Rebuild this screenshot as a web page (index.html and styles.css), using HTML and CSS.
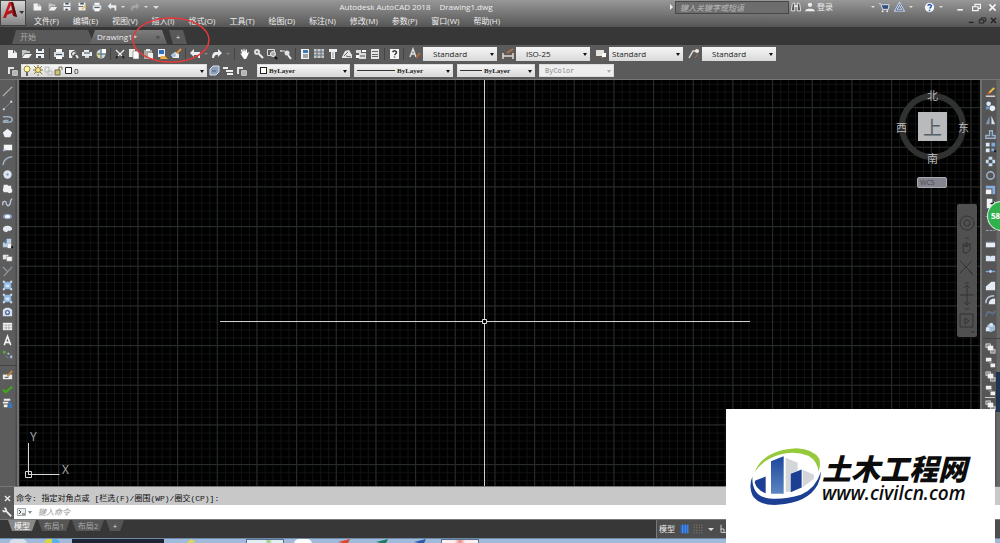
FILE: index.html
```html
<!DOCTYPE html>
<html lang="zh-CN">
<head>
<meta charset="utf-8">
<title>Autodesk AutoCAD 2018 Drawing1.dwg</title>
<link rel="stylesheet" href="styles.css">
</head>
<body>
<svg class="sprite" aria-hidden="true">
  <defs>
    <linearGradient id="blueFade" x1="0" y1="0" x2="0" y2="1"><stop offset="0" stop-color="#1d459b"/><stop offset="1" stop-color="#5b86c2"/></linearGradient>
    <linearGradient id="redFade" x1="0" y1="0" x2="1" y2="1"><stop offset="0" stop-color="#e02222"/><stop offset="1" stop-color="#8e0d12"/></linearGradient>
  </defs>
  <symbol id="new" viewBox="0 0 14 14"><path fill="#f2f2f2" d="M3 3h5v3h4v5H3z"/><path fill="#cfcfcf" d="M9 3l3 3H9z"/></symbol>
  <symbol id="open" viewBox="0 0 14 14"><path fill="#bfc4c4" d="M3 3h4l1 1h3v2H6l-3 4z"/><path fill="#f0f0f0" d="M6 7h7l-3 4H3z"/></symbol>
  <symbol id="save" viewBox="0 0 14 14"><path fill="#eef1f3" d="M3 2h8v9H3z"/><path fill="#45505a" d="M5 2h4v2H5zM3 6h8v1H3zM5 9h3v2H5z"/></symbol>
  <symbol id="saveas" viewBox="0 0 14 14"><path fill="#eef1f3" d="M3 2h8v9H3z"/><path fill="#45505a" d="M5 2h4v2H5zM3 6h5v1H3z"/><path stroke="#f0c060" stroke-width="2" d="M7 10l4-5"/></symbol>
  <symbol id="print" viewBox="0 0 14 14"><path fill="#f4f4f4" d="M4 2h6v3H4z"/><path fill="#d5dce2" d="M2 5h10v5H2z"/><path fill="#4a4f54" d="M4 7h6v1H4z"/><path fill="#fff" d="M4 9h6v3H4z"/></symbol>
  <symbol id="preview" viewBox="0 0 14 14"><path fill="#eee" d="M3 3h5l3 3-3 1-2 4H3z"/><circle cx="8" cy="7" r="2.500" fill="none" stroke="#444"/><path stroke="#eee" stroke-width="2" d="M10 8l2 3"/></symbol>
  <symbol id="plot" viewBox="0 0 14 14"><path fill="#e6edf2" d="M4 3h5v2h3v4H2V5h2z"/><path stroke="#444" d="M4 6h6"/><path fill="#cfdae2" d="M5 9h4v2H5z"/></symbol>
  <symbol id="globe" viewBox="0 0 14 14"><circle cx="7" cy="7" r="4.500" fill="#c9d9e9"/><path fill="#eed768" d="M3 5l3 1 1 5-3-1z"/><path fill="#fff" d="M8 2h4v4H8z"/><path stroke="#4d6580" d="M7 3v8M3 7h8"/></symbol>
  <symbol id="cut" viewBox="0 0 14 14"><path fill="none" stroke="#ededed" stroke-width="1.300" d="M3 3l7 7M11 3l-7 7"/><path stroke="#222" stroke-width="2" d="M3 11l2-2M9 9l2 2"/></symbol>
  <symbol id="copy" viewBox="0 0 14 14"><path fill="#e9eeea" d="M2 2h6v8H2z"/><path fill="#fff" stroke="#777" stroke-width=".6" d="M6 4h4l2 2v6H6z"/></symbol>
  <symbol id="paste" viewBox="0 0 14 14"><path fill="#aaa79e" d="M3 3h8v9H3z"/><path fill="#eee" d="M5 2h4v2H5zM7 6h5v6H7z"/></symbol>
  <symbol id="match" viewBox="0 0 14 14"><path fill="#eef" d="M3 2h7v8H3z"/><path fill="#2e6fc4" d="M4 3h5v4H4z"/><path fill="#efad3f" d="M6 9h4l3 3H5z"/></symbol>
  <symbol id="block" viewBox="0 0 14 14"><path fill="#e9edf2" d="M2 8l4-3 4 2v4H4z"/><path stroke="#e79138" stroke-width="2" d="M8 6l4-4"/><circle cx="5" cy="8" r="2" fill="#a5bfdf"/></symbol>
  <symbol id="undo" viewBox="0 0 14 14"><path fill="#e9eef2" d="M2 6l4-4v3h6v6h-2V8H6v2z"/></symbol>
  <symbol id="redo" viewBox="0 0 14 14"><path fill="#e9eef2" d="M12 6L8 2v3H5Q2 6 2 11h2q1-4 4-3v2z"/></symbol>
  <symbol id="hand" viewBox="0 0 14 14"><path fill="#fff" d="M3 6l2 1-1-4 1-1 1 3 1-4 1 4 1-3 1 1v3l2-1-1 3-2 4H7z"/></symbol>
  <symbol id="zoom" viewBox="0 0 14 14"><circle cx="6" cy="5" r="3" fill="#dfe3e6"/><circle cx="6" cy="5" r="1" fill="#666"/><path stroke="#eee" stroke-width="2" d="M8 7l4 4"/></symbol>
  <symbol id="zoomwin" viewBox="0 0 14 14"><path fill="none" stroke="#ddd" d="M2.500 2.500h7v6h-7z"/><circle cx="8" cy="7" r="2.500" fill="#aaa" stroke="#eee"/><path stroke="#111" stroke-width="2" d="M10 10l2 2"/></symbol>
  <symbol id="zoomprev" viewBox="0 0 14 14"><path stroke="#ddd" d="M1 4h5M2 3v2"/><circle cx="8" cy="6" r="2.500" fill="#dfe3e6"/><path stroke="#eee" stroke-width="2" d="M9 8l3 4"/></symbol>
  <symbol id="props" viewBox="0 0 14 14"><path fill="#f1f3f5" d="M3 2h8v10H3z"/><path fill="#3f7bb3" d="M5 3h5v3H5z"/><path stroke="#555" d="M5 8h5M5 10h5"/></symbol>
  <symbol id="design" viewBox="0 0 14 14"><path fill="#c4c9ce" d="M2 2h10v9H2z"/><path stroke="#697078" d="M2 5h10M2 8h10M5 2v9M9 2v9"/></symbol>
  <symbol id="palette" viewBox="0 0 14 14"><path fill="#eee" d="M3 2h8v3H9v7H5V5H3z"/><path stroke="#999" d="M7 5v6"/></symbol>
  <symbol id="sheet" viewBox="0 0 14 14"><path fill="#e5e5e5" d="M2 10l3-6 4-1 3 5v3H2z"/><path stroke="#666" d="M4 9l4-4M6 9l5 1"/></symbol>
  <symbol id="markup" viewBox="0 0 14 14"><path fill="#ddd" d="M2 3h5v3H2zM5 6h7v6H5z"/><path fill="#fff" d="M8 3h4v2H8zM2 8h3v3H2z"/><path stroke="#555" d="M6 9h5"/></symbol>
  <symbol id="calc" viewBox="0 0 14 14"><path fill="#e7e7e7" d="M3 2h8v10H3z"/><path stroke="#666" d="M4 4.500h6M4 7.500h6M4 9.500h6"/></symbol>
  <symbol id="help" viewBox="0 0 14 14"><path fill="#f5f5f5" d="M3 2h9v10H3z"/><path fill="none" stroke="#333" stroke-width="1.500" d="M5.500 5q2-2.500 4 0 0 1.500-2 3M7.500 9.500v1"/></symbol>
  <symbol id="textstyle" viewBox="0 0 14 14"><path fill="none" stroke="#ddd" stroke-width="1.500" d="M2 10l3-8 3 8M3 7h4"/><path stroke="#b5683d" stroke-width="2" d="M8 11l4-5"/></symbol>
  <symbol id="dimstyle" viewBox="0 0 14 14"><path stroke="#e5dacb" stroke-width="1.500" d="M2 6v6M12 6v6M2 9h10"/><path stroke="#b07049" stroke-width="2" d="M6 6l6-4"/></symbol>
  <symbol id="tablestyle" viewBox="0 0 14 14"><path fill="#e8e4dd" d="M2 3h8v6H2z"/><path stroke="#b57a4f" stroke-width="2" d="M8 11l4-5"/><path fill="#fff" d="M8 6h4v4H8z"/></symbol>
  <symbol id="leader" viewBox="0 0 14 14"><path fill="none" stroke="#ddd" stroke-width="1.500" d="M2 11l4-7h3"/><circle cx="10" cy="4" r="2" fill="#f4ead9"/><path stroke="#a9724b" d="M8 11l3-4"/></symbol>
  <symbol id="layers" viewBox="0 0 14 14"><path fill="#dfe4e8" d="M2 3h6v2H4v5H2z"/><path fill="#fff" stroke="#555" stroke-width=".7" d="M6 6h6v6H6z"/><path stroke="#667" d="M7 8h4M7 10h4"/></symbol>
  <symbol id="layerstack" viewBox="0 0 14 14"><path fill="#8aa0bd" stroke="#dde6f0" d="M3 5l3-3h6v6l-3 3H3z"/><path stroke="#455f80" d="M5 7h4"/></symbol>
  <symbol id="layerlist" viewBox="0 0 14 14"><path fill="#eee" d="M2 3h5v2H2zM5 6h7v2H5zM6 9h6v2H6z"/></symbol>
  <symbol id="line" viewBox="0 0 14 14"><path stroke="#aeb4ba" stroke-width="1.400" d="M2 12L12 2"/></symbol>
  <symbol id="xline" viewBox="0 0 14 14"><path stroke="#7c8fae" d="M3 11l8-8"/><path fill="#cfdcf0" d="M2 10h2v2H2zM10 2h2v2h-2z"/></symbol>
  <symbol id="pline" viewBox="0 0 14 14"><path fill="none" stroke="#9eb0c4" stroke-width="1.600" d="M2 4h6q4 0 4 3t-4 3H3q-1-1 1-2h4"/></symbol>
  <symbol id="polygon" viewBox="0 0 14 14"><path fill="#edf0f6" d="M7 2l5 4-2 5H4L2 6z"/></symbol>
  <symbol id="rect" viewBox="0 0 14 14"><path fill="#f3f5f8" d="M3 4h9v6H3z"/><path fill="#9db5d2" d="M2 9h3v2H2z"/></symbol>
  <symbol id="arc" viewBox="0 0 14 14"><path fill="none" stroke="#a6b6c8" stroke-width="1.500" d="M2 12q1-8 10-9"/></symbol>
  <symbol id="circle" viewBox="0 0 14 14"><circle cx="7" cy="7" r="4.500" fill="#dce4ef"/><path fill="#7387a6" d="M6 6h2v2H6z"/></symbol>
  <symbol id="cloud" viewBox="0 0 14 14"><path fill="#eef0f4" d="M3 3h4l1 1h3v3l1 1v3l-3 1-2-1H3l-1-2z"/></symbol>
  <symbol id="spline" viewBox="0 0 14 14"><path fill="none" stroke="#b9c5d5" stroke-width="1.500" d="M2 10q-1-5 3-4 2 8 5 2 0-4 2-5"/></symbol>
  <symbol id="ellipse" viewBox="0 0 14 14"><ellipse cx="7" cy="7" rx="5" ry="3" fill="#8698be"/><ellipse cx="7" cy="7" rx="3" ry="2" fill="#f1f4fa"/></symbol>
  <symbol id="ellarc" viewBox="0 0 14 14"><path fill="#e5eaf2" d="M2 7q0-4 5-4t5 4l-3 2-1-1-2 2-3-1z"/></symbol>
  <symbol id="insert" viewBox="0 0 14 14"><path fill="#b8d0e4" d="M6 2h5v5H6zM2 6h5v5H2z"/><path fill="#f2f5f8" d="M7 7h4v5H7z"/><path fill="#5a7ba0" d="M4 4h2v3H4z"/><path fill="#111" d="M11 10h2v2h-2z"/></symbol>
  <symbol id="makeblock" viewBox="0 0 14 14"><path fill="#dce3ea" d="M2 4h6v5H2z"/><path fill="#f7f7f7" stroke="#777" stroke-width=".6" d="M6 6h6v5H6z"/></symbol>
  <symbol id="point" viewBox="0 0 14 14"><path stroke="#9098a4" stroke-width="1.300" d="M2 2l5 5M12 2L3 12"/></symbol>
  <symbol id="hatch" viewBox="0 0 14 14"><path fill="#8fb5e3" d="M3 3h8v8H3z"/><path fill="#d6e6f8" d="M2 2h2v2H2zM10 2h2v2h-2zM2 10h2v2H2zM10 10h2v2h-2zM5 6h4v3H5z"/></symbol>
  <symbol id="region" viewBox="0 0 14 14"><path fill="#d5dff0" d="M2 4l3-2h4l3 2v7H2z"/><circle cx="7" cy="7" r="2" fill="#fff" stroke="#4e6b9c" stroke-width="1.500"/></symbol>
  <symbol id="table" viewBox="0 0 14 14"><path fill="#f2f2f2" d="M2 3h10v8H2z"/><path stroke="#999" stroke-width=".7" d="M2 5.500h10M2 8.500h10M5.500 5v6M8.500 5v6"/></symbol>
  <symbol id="mtext" viewBox="0 0 14 14"><path fill="none" stroke="#f3f3f3" stroke-width="1.700" d="M3.500 12L7 2.500 10.500 12M5 9h4"/></symbol>
  <symbol id="addsel" viewBox="0 0 14 14"><path fill="#59a83a" d="M2 3h3v3H2z"/><path fill="#b8c9e6" d="M7 5h2v2H7zM10 8h2v3h-2z"/><path stroke="#8295b0" d="M5 8l3 3"/></symbol>
  <symbol id="pencil" viewBox="0 0 14 14"><path fill="#eee" d="M2 6h10v5H2z"/><path stroke="#c88640" stroke-width="2" d="M7 8l5-6"/><path stroke="#444" d="M4 9h4"/></symbol>
  <symbol id="check" viewBox="0 0 14 14"><path fill="none" stroke="#42a51c" stroke-width="2.500" d="M2 7l3 3 7-6"/></symbol>
  <symbol id="list" viewBox="0 0 14 14"><path fill="#eee" d="M3 2h7v2H3zM2 5h6v2H2zM3 8h4v3H3z"/><path fill="#3b78bb" d="M8 6h4v6H8z"/></symbol>
  <symbol id="erase" viewBox="0 0 14 14"><path stroke="#f2c33f" stroke-width="2" d="M5 8l6-6"/><path stroke="#d54a35" stroke-width="2" d="M4 9l2-2"/><path stroke="#ddd" stroke-width="1.500" d="M2 11h10"/></symbol>
  <symbol id="copyobj" viewBox="0 0 14 14"><circle cx="5" cy="4" r="2.500" fill="#dbe8f5"/><circle cx="9" cy="9" r="3" fill="#e8f0fa"/><path fill="#6e98c8" d="M2 7h4v3H2z"/></symbol>
  <symbol id="mirror" viewBox="0 0 14 14"><path fill="#8299b4" d="M6 2v9H2z"/><path fill="#d7e2ee" d="M8 2v9h4z"/></symbol>
  <symbol id="offset" viewBox="0 0 14 14"><path fill="none" stroke="#9ab0ca" stroke-width="1.500" d="M2 11h10V8H9V3H6v5H2z"/></symbol>
  <symbol id="array" viewBox="0 0 14 14"><path fill="#dce9f8" d="M2 2h4v4H2zM2 8h4v4H2z"/><path fill="#7ea9de" d="M8 2h4v4H8zM8 8h3v3H8z"/><path fill="#111" d="M11 10h2v2h-2z"/></symbol>
  <symbol id="move" viewBox="0 0 14 14"><path fill="#c8dcf4" d="M5 2h4v3H5zM5 9h4v3H5zM2 5h3v4H2zM9 5h3v4H9z"/></symbol>
  <symbol id="rotate" viewBox="0 0 14 14"><circle cx="7" cy="7" r="4" fill="none" stroke="#a6bbd5" stroke-width="1.500"/></symbol>
  <symbol id="scale" viewBox="0 0 14 14"><path fill="#86ace0" d="M2 3h10v9H9V6H2z"/><path fill="#eff4fb" d="M2 7h6v5H2z"/></symbol>
  <symbol id="stretch" viewBox="0 0 14 14"><path fill="#f2f4f8" d="M3 2h6v3h3v7H3z"/><path stroke="#111" stroke-width="1.500" d="M7 7h5M10 5v4"/></symbol>
  <symbol id="trim" viewBox="0 0 14 14"><path stroke="#9aa8ba" stroke-dasharray="3 1" d="M2 7h10"/></symbol>
  <symbol id="breakpt" viewBox="0 0 14 14"><path fill="#e8eef5" d="M2 5h10v5H2z"/><path fill="#8da1b8" d="M2 4h10v1H2z"/></symbol>
  <symbol id="brk" viewBox="0 0 14 14"><path fill="#dce6f2" d="M2 4h4l1 1 1-1h4v6H2z"/></symbol>
  <symbol id="join" viewBox="0 0 14 14"><path stroke="#7ca6dc" stroke-width="1.500" d="M2 7h10"/><circle cx="7" cy="7" r="1.500" fill="#b6d0f2"/></symbol>
  <symbol id="chamfer" viewBox="0 0 14 14"><path fill="#e5ebf2" d="M2 12V8l6-5h4v9z"/></symbol>
  <symbol id="fillet" viewBox="0 0 14 14"><path fill="none" stroke="#bac7d8" stroke-width="1.500" d="M2 11q0-8 9-8"/><path fill="#e5ebf2" d="M5 12q0-6 7-6v6z"/></symbol>
  <symbol id="blend" viewBox="0 0 14 14"><path fill="none" stroke="#63799a" stroke-width="1.500" d="M2 10q2-7 5-4t5-2"/></symbol>
  <symbol id="explode" viewBox="0 0 14 14"><path fill="#a3bad5" d="M4 4l4-2 4 3v5l-5 2-5-3z"/><path fill="#dce8f5" d="M6 3l3-1 1 4H6zM2 7h4v4H2z"/></symbol>
  <symbol id="front" viewBox="0 0 14 14"><path fill="#8b8b8b" stroke="#ddd" stroke-width=".8" d="M2 2h5v4H2zM7 8h5v4H7z"/><path fill="#f2f2f2" d="M4 4h6v5H4z"/></symbol>
  <symbol id="back" viewBox="0 0 14 14"><path fill="#f2f2f2" d="M2 2h6v4H2zM7 8h5v4H7z"/><path fill="#888" d="M5 6h4v2H5z"/></symbol>
  <symbol id="cart" viewBox="0 0 14 14"><path fill="#324e7b" stroke="#e3e8ef" d="M1 3h2l2 6h6l1-5H4"/><circle cx="5" cy="11" r="1" fill="#eee"/><circle cx="10" cy="11" r="1" fill="#eee"/></symbol>
  <symbol id="a360" viewBox="0 0 14 14"><path fill="none" stroke="#dce6f5" stroke-width="2.500" d="M7 3l4 7H3z"/><path fill="none" stroke="#45649d" d="M7 3l4 7H3z"/></symbol>
  <symbol id="qhelp" viewBox="0 0 14 14"><circle cx="7" cy="7" r="5" fill="#f3f6fa"/><path fill="none" stroke="#2355ae" stroke-width="1.500" d="M5 5q2-2.500 4 0 0 1.500-2 3M7 9.500V11"/></symbol>
  <symbol id="binoc" viewBox="0 0 14 14"><path fill="#555" stroke="#eee" d="M1.500 11.500l1-7 1-2h2v9zM8.500 11.500v-9h2l1 2 1 7z"/><path stroke="#eee" stroke-width="2" d="M5 6h4"/></symbol>
  <symbol id="user" viewBox="0 0 14 14"><circle cx="7" cy="4.500" r="2.500" fill="#eee"/><path fill="#eee" d="M1 12q1-3 4-3h4q3 0 4 3z"/></symbol>
  <symbol id="min" viewBox="0 0 14 14"><path fill="currentColor" d="M3 9h7v2H3z"/></symbol>
  <symbol id="restore" viewBox="0 0 14 14"><path fill="none" stroke="currentColor" stroke-width="1.500" d="M5 6V3h7v5H9M2 6h7v5H2z"/></symbol>
  <symbol id="close" viewBox="0 0 14 14"><path stroke="currentColor" stroke-width="2" d="M3 3l8 8M11 3l-8 8"/></symbol>
  <symbol id="wrench" viewBox="0 0 14 14"><path fill="none" stroke="#eee" stroke-width="2" d="M2 5q2 3 4 0 0-2-2-3M6 6l6 6"/></symbol>
</svg>

<div class="app">
  <header class="header">
    <button class="app-menu" aria-label="应用程序菜单">
      <svg viewBox="0 0 26 26"><path fill="url(#redFade)" d="M3 18L9 2h4l4 15-4-1-1-3-5 2-1 3zM8 11l4-1-1-5z"/><path fill="#5a1315" d="M11 2h2l4 15-3-1z"/><path fill="#333" d="M19 11h5l-2 3z"/></svg>
    </button>
    <div class="header-rows">
      <div class="titlebar">
        <div class="quick">
          <button aria-label="新建"><svg><use href="#new"/></svg></button>
          <button aria-label="打开"><svg><use href="#open"/></svg></button>
          <button aria-label="保存"><svg><use href="#save"/></svg></button>
          <button aria-label="另存为"><svg><use href="#saveas"/></svg></button>
          <button aria-label="打印"><svg><use href="#print"/></svg></button>
          <button aria-label="放弃"><svg><use href="#undo"/></svg></button>
          <span class="drop"></span>
          <button class="faint" aria-label="重做"><svg><use href="#redo"/></svg></button>
          <span class="drop"></span>
          <span class="drop wide"></span>
        </div>
        <h1 class="title"><span>Autodesk AutoCAD 2018</span><span>Drawing1.dwg</span></h1>
        <div class="search"><span class="play"></span><input type="text" aria-label="搜索" placeholder="键入关键字或短语"></div>
        <div class="account">
          <button aria-label="查找"><svg><use href="#binoc"/></svg></button>
          <button class="login"><svg><use href="#user"/></svg>登录</button>
        </div>
        <div class="services">
          <span class="drop"></span>
          <button aria-label="商店"><svg><use href="#cart"/></svg></button>
          <button aria-label="A360"><svg><use href="#a360"/></svg></button>
          <span class="drop"></span>
          <button class="assist" aria-label="帮助"><svg><use href="#qhelp"/></svg></button>
          <span class="drop"></span>
        </div>
        <div class="window-buttons">
          <button aria-label="最小化"><svg><use href="#min"/></svg></button>
          <button aria-label="还原"><svg><use href="#restore"/></svg></button>
          <button aria-label="关闭"><svg><use href="#close"/></svg></button>
        </div>
      </div>
      <nav class="menubar">
        <a href="#">文件(F)</a><a href="#">编辑(E)</a><a href="#">视图(V)</a><a href="#">插入(I)</a><a href="#">格式(O)</a><a href="#">工具(T)</a><a href="#">绘图(D)</a><a href="#">标注(N)</a><a href="#">修改(M)</a><a href="#">参数(P)</a><a href="#">窗口(W)</a><a href="#">帮助(H)</a>
        <div class="doc-buttons">
          <button aria-label="最小化图形"><svg><use href="#min"/></svg></button>
          <button aria-label="还原图形"><svg><use href="#restore"/></svg></button>
          <button aria-label="关闭图形"><svg><use href="#close"/></svg></button>
        </div>
      </nav>
    </div>
  </header>

  <div class="file-tabs">
    <button class="file-tab">开始</button>
    <button class="file-tab active">Drawing1*<span class="x">×</span></button>
    <button class="file-tab add" aria-label="新图形">+</button>
  </div>

  <div class="toolbars">
    <div class="toolbar">
      <div class="group"><button aria-label="新建"><svg><use href="#new"/></svg></button><button aria-label="打开"><svg><use href="#open"/></svg></button><button aria-label="保存"><svg><use href="#save"/></svg></button></div>
      <div class="group"><button aria-label="打印"><svg><use href="#print"/></svg></button><button aria-label="打印预览"><svg><use href="#preview"/></svg></button><button aria-label="发布"><svg><use href="#plot"/></svg></button><button aria-label="三维打印"><svg><use href="#globe"/></svg></button></div>
      <div class="group"><button aria-label="剪切"><svg><use href="#cut"/></svg></button><button aria-label="复制"><svg><use href="#copy"/></svg></button><button aria-label="粘贴"><svg><use href="#paste"/></svg></button><button aria-label="特性匹配"><svg><use href="#match"/></svg></button><button aria-label="块编辑器"><svg><use href="#block"/></svg></button></div>
      <div class="group"><button aria-label="放弃"><svg><use href="#undo"/></svg></button><span class="drop dim"></span><button aria-label="重做"><svg><use href="#redo"/></svg></button><span class="drop dim"></span></div>
      <div class="group"><button aria-label="平移"><svg><use href="#hand"/></svg></button><button aria-label="缩放"><svg><use href="#zoom"/></svg></button><button aria-label="窗口缩放"><svg><use href="#zoomwin"/></svg></button><button aria-label="缩放上一个"><svg><use href="#zoomprev"/></svg></button></div>
      <div class="group"><button aria-label="特性"><svg><use href="#props"/></svg></button><button aria-label="设计中心"><svg><use href="#design"/></svg></button><button aria-label="工具选项板"><svg><use href="#palette"/></svg></button><button aria-label="图纸集"><svg><use href="#sheet"/></svg></button><button aria-label="标记集"><svg><use href="#markup"/></svg></button><button aria-label="计算器"><svg><use href="#calc"/></svg></button></div>
      <div class="group"><button aria-label="帮助"><svg><use href="#help"/></svg></button></div>
      <div class="styles">
        <label class="combo"><svg><use href="#textstyle"/></svg><select aria-label="文字样式"><option>Standard</option></select></label>
        <label class="combo"><svg><use href="#dimstyle"/></svg><select aria-label="标注样式"><option>ISO-25</option></select></label>
        <label class="combo near"><svg><use href="#tablestyle"/></svg><select aria-label="表格样式"><option>Standard</option></select></label>
        <label class="combo"><svg><use href="#leader"/></svg><select aria-label="多重引线样式"><option>Standard</option></select></label>
      </div>
    </div>
    <div class="toolbar props">
      <button aria-label="图层特性"><svg><use href="#layers"/></svg></button>
      <label class="combo layer"><select aria-label="图层"><option>0</option></select>
        <svg class="layer-state" viewBox="0 0 54 13"><circle cx="6" cy="5" r="3" fill="#fff9a8" stroke="#8f8a40"/><path stroke="#666" stroke-width="2" d="M6 8v4"/><circle cx="17" cy="6" r="2.500" fill="#f6e98a" stroke="#8a7a30"/><path stroke="#8a7a30" d="M17 1v2M17 10v2M12 6h2M20 6h2M13 2l2 2M21 2l-2 2M13 10l2-2M21 10l-2-2"/><path fill="none" stroke="#b9b9b9" d="M24 3h4v5h-4zM27 7h4v4h-4z"/><path fill="#cfc373" stroke="#6d6a4a" d="M34 6h5v5h-5z"/><path fill="none" stroke="#6d6a4a" d="M38 6V3h3v3"/><path fill="#fff" stroke="#222" d="M44.500 3.500h6v6h-6z"/></svg></label>
      <div class="group"><button aria-label="置为当前"><svg><use href="#layerstack"/></svg></button><button aria-label="上一个图层"><svg><use href="#layerlist"/></svg></button><button aria-label="图层状态"><svg><use href="#layers"/></svg></button></div>
      <div class="bylayer">
        <label class="combo color"><i class="swatch"></i><select aria-label="颜色"><option>ByLayer</option></select></label>
        <label class="combo linetype"><i class="rule"></i><select aria-label="线型"><option>ByLayer</option></select></label>
        <label class="combo weight"><i class="rule"></i><select aria-label="线宽"><option>ByLayer</option></select></label>
        <label class="combo plotstyle"><select aria-label="打印样式" disabled><option>ByColor</option></select></label>
      </div>
    </div>
  </div>

  <main class="workspace">
    <div class="side">
      <div class="draw-tools">
        <button aria-label="直线"><svg><use href="#line"/></svg></button><button aria-label="构造线"><svg><use href="#xline"/></svg></button><button aria-label="多段线"><svg><use href="#pline"/></svg></button><button aria-label="多边形"><svg><use href="#polygon"/></svg></button><button aria-label="矩形"><svg><use href="#rect"/></svg></button><button aria-label="圆弧"><svg><use href="#arc"/></svg></button><button aria-label="圆"><svg><use href="#circle"/></svg></button><button aria-label="修订云线"><svg><use href="#cloud"/></svg></button><button aria-label="样条曲线"><svg><use href="#spline"/></svg></button><button aria-label="椭圆"><svg><use href="#ellipse"/></svg></button><button aria-label="椭圆弧"><svg><use href="#ellarc"/></svg></button><button aria-label="插入块"><svg><use href="#insert"/></svg></button><button aria-label="创建块"><svg><use href="#makeblock"/></svg></button><button aria-label="点"><svg><use href="#point"/></svg></button><button aria-label="图案填充"><svg><use href="#hatch"/></svg></button><button aria-label="渐变色"><svg><use href="#hatch"/></svg></button><button aria-label="面域"><svg><use href="#region"/></svg></button><button aria-label="表格"><svg><use href="#table"/></svg></button><button aria-label="多行文字"><svg><use href="#mtext"/></svg></button><button aria-label="添加选定对象"><svg><use href="#addsel"/></svg></button>
      </div>
      <div class="side-group">
        <button aria-label="编辑"><svg><use href="#pencil"/></svg></button><button aria-label="检查"><svg><use href="#check"/></svg></button><button aria-label="配置"><svg><use href="#list"/></svg></button>
      </div>
    </div>

    <div class="canvas">
      <svg class="grid" aria-hidden="true">
        <defs>
          <pattern id="minor" x="7.800" y="3.700" width="7.930" height="7.930" patternUnits="userSpaceOnUse"><path fill="none" stroke="#101312" d="M0 .5h8M.5 0v8"/></pattern>
          <pattern id="major" x="39" y="27" width="39.670" height="39.670" patternUnits="userSpaceOnUse"><path fill="none" stroke="#272b29" d="M0 .5h40M.5 0v40"/></pattern>
        </defs>
        <rect width="100%" height="100%" fill="url(#minor)"/>
        <rect width="100%" height="100%" fill="url(#major)"/>
      </svg>
      <svg class="crosshair" viewBox="0 0 530 408" aria-hidden="true"><path fill="none" stroke="#d0d0d0" d="M0 241.500h262M267 241.500h263M264.500 0v239M264.500 244v164"/><path fill="none" stroke="#e0e0e0" d="M262.500 239.500h4v4h-4z"/></svg>
      <svg class="ucs" viewBox="0 -8 56 58" aria-label="UCS"><path fill="none" stroke="#d8d8d8" d="M3.500 12v32M3.500 43.500h31M.5 40.500h6v6h-6z"/><text x="5" y="10">Y</text><text x="37" y="43">X</text></svg>
      <div class="viewcube">
        <span class="n">北</span><span class="w">西</span><button class="top">上</button><span class="e">东</span><span class="s">南</span>
      </div>
      <button class="wcs">WCS</button>
      <div class="navbar"><svg viewBox="0 0 20 133" fill="none" stroke="#333"><circle cx="10" cy="19" r="7"/><circle cx="10" cy="19" r="3"/><path d="M8 34h4M6 44v-4h2v3l2-5v5l3-4v7l-3 3H7zM3 57l12 12M15 57L3 69M11 65l5 6M8 79h4M10 82v18M3 91h14M7 84l3-3 3 3M7 98l3 3 3-3M8 105h4M3 110h13v13H3zM8 114l4 3-4 3zM14 128h4"/></svg></div>
    </div>

    <div class="side right">
      <div class="modify-tools">
        <button aria-label="删除"><svg><use href="#erase"/></svg></button><button aria-label="复制"><svg><use href="#copyobj"/></svg></button><button aria-label="镜像"><svg><use href="#mirror"/></svg></button><button aria-label="偏移"><svg><use href="#offset"/></svg></button><button aria-label="阵列"><svg><use href="#array"/></svg></button><button aria-label="移动"><svg><use href="#move"/></svg></button><button aria-label="旋转"><svg><use href="#rotate"/></svg></button><button aria-label="缩放"><svg><use href="#scale"/></svg></button><button aria-label="拉伸"><svg><use href="#stretch"/></svg></button><button aria-label="修剪"><svg><use href="#trim"/></svg></button><button aria-label="延伸"><svg><use href="#trim"/></svg></button><button aria-label="打断于点"><svg><use href="#breakpt"/></svg></button><button aria-label="打断"><svg><use href="#brk"/></svg></button><button aria-label="合并"><svg><use href="#join"/></svg></button><button aria-label="倒角"><svg><use href="#chamfer"/></svg></button><button aria-label="圆角"><svg><use href="#fillet"/></svg></button><button aria-label="光顺曲线"><svg><use href="#blend"/></svg></button><button aria-label="分解"><svg><use href="#explode"/></svg></button>
      </div>
      <div class="side-group order">
        <button aria-label="前置"><svg><use href="#front"/></svg></button><button aria-label="后置"><svg><use href="#back"/></svg></button><button aria-label="置于对象之上"><svg><use href="#front"/></svg></button><button aria-label="置于对象之下"><svg><use href="#back"/></svg></button><hr><button aria-label="文字前置"><svg><use href="#front"/></svg></button>
      </div>
      <span class="edge"></span>
    </div>
  </main>

  <section class="command">
    <div class="command-grip">
      <button aria-label="关闭命令行"><svg class="cmd-x"><use href="#close"/></svg></button>
      <button aria-label="自定义"><svg><use href="#wrench"/></svg></button>
    </div>
    <div class="command-body">
      <p class="history">命令: 指定对角点或 [栏选(F)/圈围(WP)/圈交(CP)]:</p>
      <div class="prompt"><svg viewBox="0 0 16 10"><path fill="#e8ecef" stroke="#a0a6aa" d="M.5 1.500h8v7h-8z"/><path fill="none" stroke="#555" d="M2 3l2 2-2 2M5 7h3"/><path fill="#888" d="M11 4h4l-2 3z"/></svg><input type="text" aria-label="命令" placeholder="键入命令"></div>
    </div>
  </section>

  <footer class="bottom">
    <div class="layout-tabs"><button class="active">模型</button><button>布局1</button><button>布局2</button><button class="plus" aria-label="新建布局">+</button></div>
    <div class="status"><button>模型</button><button class="on" aria-label="栅格"><svg viewBox="0 0 14 14"><path fill="#2765c4" d="M3 2h9v10H3z"/><path stroke="#5d9cf0" d="M5.500 2v10M8.500 2v10M11.500 2v10"/></svg></button><button aria-label="捕捉"><svg viewBox="0 0 14 14"><path stroke="#9b978b" stroke-dasharray="1 2" d="M2 2.500h10M2 5.500h10M2 8.500h10M2 11.500h10"/></svg></button><span class="drop wide"></span><button class="ortho" aria-label="正交"><svg viewBox="0 0 14 14"><path fill="none" stroke="#ddd" d="M3.500 2v9h8M3 7h4v4"/></svg></button></div>
  </footer>
  <div class="taskbar"><i class="orb"></i><i class="ball"></i><i class="panel"></i><i class="flag"></i><i class="win green"></i><i class="blob"></i><i class="mark red"></i><i class="mark teal"></i><i class="mark navy"></i><i class="win pink"></i></div>

  <svg class="annotation" viewBox="0 0 80 48" aria-hidden="true"><ellipse cx="40" cy="24" rx="38" ry="22" fill="none" stroke="#e8383a" stroke-width="1.500"/></svg>
  <div class="badge">58</div>
  <aside class="watermark">
    <svg viewBox="0 0 216 176"><path fill="#97c93d" d="M14 75Q40 8 140 3q50 2 68 32 5 22-3 38Q203 42 175 26 135 10 90 22 40 36 14 75z"/><path fill="#1c3f94" d="M7 88q-12 30 1 58 20 30 75 27 90-5 120-60 10-20 10-40-15 50-60 70-50 15-95 11Q5 148 7 88z"/><path fill="#d3d5d9" d="M107 32l36 15v23l-22 9v55h-14zM158 68l34 15v12l-34 25z"/><path fill="url(#blueFade)" d="M63 42l38-15v113H63z"/><path fill="#1c3f94" d="M16 100l31-12v50q-26-9-33-32zM122 80l33-13v54l-33 14z"/></svg>
    <div class="brand"><strong>土木工程网</strong><span>www.civilcn.com</span></div>
  </aside>
</div>
</body>
</html>
```
FILE: styles.css
```css
* { box-sizing: border-box; }
body {
  margin: 0;
  font: 8px/12px "Open Sans", "Noto Sans CJK SC", sans-serif;
  color: #eee;
  background: #5b5b5b;
}
button, input, select { font: inherit; color: inherit; margin: 0; padding: 0; border: 0; background: none; border-radius: 0; }
button { display: flex; align-items: center; justify-content: center; flex: none; }
button svg, .combo > svg { width: 14px; height: 14px; flex: none; }
h1, p { margin: 0; font-weight: normal; font-size: 8px; }
a { color: inherit; text-decoration: none; }
.sprite { position: absolute; width: 0; height: 0; }
.app { position: relative; display: flex; flex-direction: column; height: 100vh; overflow: hidden; }

.drop { flex: none; width: 8px; display: flex; justify-content: center; align-items: center; }
.drop::before { content: ""; border: 2px solid transparent; border-top-color: #ddd; border-bottom: 0; }
.drop.dim::before { border-top-color: #888; }
.drop.wide { width: 12px; }
.drop.wide::before { border-width: 3px; border-bottom: 0; }

.header { display: flex; flex: none; height: 27px; background: linear-gradient(#989898, #555); }
.app-menu { width: 26px; height: 26px; background: linear-gradient(#d5d5d5, #858585); border: 1px solid #444; }
.app-menu svg { width: 26px; height: 26px; }
.header-rows { flex: 1; display: flex; flex-direction: column; }
.titlebar { display: flex; height: 14px; padding-left: 3px; align-items: center; }
.titlebar > div { display: flex; align-items: center; height: 14px; }
.quick button { width: 15px; }
.quick button svg { width: 12px; height: 12px; }
.faint { opacity: .3; }
.title { display: flex; gap: 9px; margin: 0 auto; white-space: pre; }
.play { border: 3px solid transparent; border-left-color: #eee; border-right: 0; margin-right: 2px; }
.search input { width: 114px; height: 13px; padding: 0 4px; background: #6d6d6d; border: 1px solid #474747; font-style: italic; }
.search input::placeholder { color: #bbb; opacity: 1; }
.account svg { width: 12px; height: 12px; }
.account button { width: 14px; }
.account .login { width: auto; gap: 1px; margin-left: 1px; }
.services { margin-left: 36px; }
.services button { width: 15px; }
.services svg { width: 13px; height: 13px; }
.services .assist { margin-left: 7px; }
.window-buttons { gap: 3px; margin: 0 1px 0 9px; color: #f5f5f5; }
.window-buttons button { width: 13px; }
.window-buttons svg { width: 11px; height: 11px; }
.menubar { display: flex; gap: 14px; align-items: center; height: 13px; padding-left: 8px; }
.doc-buttons { display: flex; margin-left: auto; padding-right: 1px; color: #222; }
.doc-buttons button { width: 11px; }
.doc-buttons svg { width: 9px; height: 9px; }

.file-tabs { display: flex; flex: none; height: 18px; padding: 3px 0 1px 12px; background: #373737; }
.file-tab { width: 82px; color: #aaa; background: #595959; justify-content: flex-start; padding-left: 8px; clip-path: polygon(4px 0, 76px 0, 100% 100%, 0 100%); }
.file-tab.active { width: 77px; margin-left: -4px; padding: 0 7px; color: #eee; background: linear-gradient(#7c7c7c, #606060); clip-path: polygon(5px 0, 72px 0, 100% 100%, 0 100%); }
.file-tab .x { margin-left: auto; color: #333; }
.file-tab.add { width: 18px; margin-left: 2px; padding: 0; justify-content: center; color: #ddd; clip-path: polygon(0 0, 14px 0, 100% 100%, 4px 100%); }

.toolbars { flex: none; display: flex; flex-direction: column; gap: 2px; padding: 1px 0; background: #5b5b5b; border-bottom: 1px solid #777; }
.toolbar { display: flex; align-items: center; height: 15px; padding-left: 5px; }
.group { display: flex; padding-right: 5px; background: linear-gradient(#444, #444) no-repeat right 2px center / 1px 12px; }
.toolbar button { width: 14px; height: 14px; }
.styles { display: flex; gap: 3px; padding-left: 1px; }
.combo { position: relative; display: flex; align-items: center; }
.combo > svg { width: 16px; }
.combo select { appearance: none; width: 74px; height: 14px; padding: 0 10px; color: #222; background: linear-gradient(#f6f6f6, #d9d9d9); }
.combo.near select { padding-left: 3px; }
.combo::after { content: ""; position: absolute; right: 3px; top: 6px; border: 2px solid transparent; border-top: 3px solid #111; border-bottom: 0; }
.props { padding-left: 6px; }
.props .combo select { height: 13px; border: 1px solid #ddd; }
.props .group { padding: 0 7px 0 0; background: none; }
.combo.layer { margin-left: 1px; }
.combo.layer select { width: 186px; padding-left: 52px; }
.combo .layer-state { position: absolute; left: 0; width: 54px; height: 13px; pointer-events: none; }
.bylayer { display: flex; gap: 4px; padding-left: 1px; }
.bylayer select { font: bold 7px "Liberation Serif", serif; }
.combo.color select { width: 93px; padding-left: 11px; }
.combo.linetype select { width: 99px; padding-left: 42px; }
.combo.weight select { width: 78px; padding-left: 26px; }
.combo.plotstyle select { width: 75px; padding-left: 5px; color: #888; opacity: 1; font: 7px "Liberation Mono", monospace; background: #eee; }
.combo.plotstyle::after { border-top-color: #aaa; }
.swatch { position: absolute; left: 3px; width: 7px; height: 7px; border: 1px solid #222; background: #fff; }
.rule { position: absolute; left: 3px; width: 38px; height: 1px; background: #333; }
.weight .rule { width: 22px; }

.workspace { flex: 1; min-height: 0; display: flex; background: #5b5b5b; }
.side { flex: none; width: 19px; padding-top: 5px; border-right: 2px solid #707070; background: linear-gradient(90deg, #5c5c5c 15px, #4a4a4a 16px); overflow: hidden; }
.side button { width: 15px; min-height: 0; }
.side svg { width: 13px; height: 13px; }
.draw-tools { display: grid; grid-auto-rows: 1fr; height: 276px; }
.side-group { display: grid; grid-auto-rows: 14px; margin-top: 4px; padding-top: 2px; border-top: 1px solid #444; }
.side.right { position: relative; width: 20px; padding: 6px 0 0 1px; border: 0; border-left: 2px solid #707070; background: linear-gradient(90deg, #555 14px, #676767 15px); }
.modify-tools { display: grid; grid-auto-rows: 1fr; height: 248px; }
.order { display: flex; flex-direction: column; }
.order button { height: 14px; }
.order hr { width: 10px; margin: 0 2px; border: 0; border-top: 1px solid #ccc; }
.edge { position: absolute; right: 0; top: 292px; width: 4px; height: 40px; background: #1d3450; }

.canvas { position: relative; flex: 1; background: #000; overflow: hidden; }
.grid { position: absolute; width: 100%; height: 100%; shape-rendering: crispEdges; }
.crosshair { position: absolute; left: 201px; top: 0; width: 530px; height: 408px; }
.ucs { position: absolute; left: 6px; bottom: 5px; width: 56px; height: 58px; }
.ucs text { font: 12px "Open Sans", sans-serif; fill: #aaa; }
.viewcube { position: absolute; right: 14px; top: 13px; width: 67px; height: 67px; border: 6px solid #303131; border-radius: 50%; display: grid; place-items: center; font: 11px/14px "Noto Sans CJK SC", sans-serif; color: #bbb; }
.viewcube span, .viewcube .top { position: absolute; }
.viewcube .top { width: 29px; height: 29px; background: #b9babb; color: #526068; font-size: 19px; }
.n { top: -11px; }
.s { bottom: -11px; }
.w { left: -9px; }
.e { right: -9px; }
.wcs { position: absolute; right: 33px; top: 97px; width: 30px; height: 11px; padding-left: 2px; justify-content: flex-start; border: 1px solid #a9a9b2; border-radius: 2px; background: #85858f; color: #45454d; font-size: 7px; }
.navbar { position: absolute; right: 3px; top: 124px; width: 20px; height: 133px; border-radius: 2px; background: #505050; }

.command { flex: none; display: flex; height: 33px; border-top: 1px solid #777; background: #c8c8c8; }
.command-grip { width: 14px; display: flex; flex-direction: column; justify-content: space-around; align-items: center; padding-top: 6px; background: #5a5a5a; }
.command-grip svg { width: 12px; height: 12px; }
.command-grip .cmd-x { width: 9px; height: 9px; }
.command-body { flex: 1; }
.history { height: 18px; padding: 5px 2px 0; font: 8px/13px "Liberation Mono", "Noto Sans CJK SC", monospace; color: #111; }
.prompt { display: flex; align-items: center; height: 14px; padding: 0 3px; gap: 5px; background: #fff; }
.prompt svg { width: 16px; height: 10px; }
.prompt input { flex: 1; color: #333; }
.prompt input::placeholder { color: #999; opacity: 1; font-style: italic; }

.bottom { flex: none; display: flex; height: 19px; background: #373737; border-top: 1px solid #777; }
.layout-tabs { display: flex; padding-left: 8px; gap: 2px; }
.layout-tabs button { height: 11px; width: 32px; background: #555; color: #aaa; clip-path: polygon(0 0, 100% 0, 28px 100%, 4px 100%); }
.layout-tabs .active { width: 28px; background: #888; color: #fff; clip-path: polygon(0 0, 100% 0, 24px 100%, 4px 100%); }
.layout-tabs .plus { width: 18px; clip-path: polygon(0 0, 100% 0, 14px 100%, 4px 100%); color: #ddd; }
.status { display: flex; width: 344px; margin-left: auto; background: #4d4d4d; border-left: 1px solid #777; }
.status button { padding: 0 1px; }
.status button:first-child { padding: 0 2px; }
.status svg { width: 12px; height: 12px; }

.taskbar { flex: none; display: flex; height: 5px; overflow: hidden; background: #9fbadb; border-top: 1px solid #718aa8; }
.taskbar i { flex: none; height: 5px; }
.orb { width: 18px; margin-left: 9px; background: #d5e0ea; border-radius: 9px 9px 0 0; }
.ball { width: 16px; margin-left: 17px; background: linear-gradient(90deg, #d7d643 50%, #58b2e5 50%); border-radius: 8px 8px 0 0; }
.panel { width: 92px; margin-left: 12px; background: #1d2535; }
.flag { width: 10px; margin-left: 22px; background: #e1d85b; clip-path: polygon(0 100%, 50% 0, 100% 60%); }
.win { width: 38px; border: 1px solid #55718f; border-bottom: 0; }
.green { margin-left: 50px; background: linear-gradient(90deg, #e3eef2 50%, #93cc80 60%, #e3eef2 70%); }
.blob { width: 18px; margin-left: 10px; background: #fff; border-radius: 6px 6px 0 0; }
.mark { width: 12px; margin-left: 26px; clip-path: polygon(0 60%, 100% 0, 80% 100%); }
.red { background: #dd482c; }
.teal { background: #1c7c63; }
.navy { background: #285ba8; }
.pink { margin-left: 15px; background: linear-gradient(90deg, #fbeeee 35%, #ee8979 50%, #fbeeee 65%); }

.annotation { position: absolute; left: 131px; top: 16px; width: 80px; height: 48px; pointer-events: none; }
.badge { position: absolute; right: -16px; top: 201px; width: 29px; height: 30px; padding-left: 3px; border: 1px solid #dceee0; border-radius: 50%; background: #2fb24c; color: #fff; font-weight: bold; line-height: 28px; }
.watermark { position: absolute; right: 5px; bottom: 0; width: 269px; height: 134px; padding: 1px 0 0 24px; display: flex; align-items: center; background: #fff; color: #0c0c0c; }
.watermark svg { flex: none; width: 72px; height: 59px; }
.brand { display: flex; flex-direction: column; padding-top: 4px; font-style: italic; white-space: nowrap; }
.brand strong { font: italic 900 29px/28px "Noto Sans CJK SC", sans-serif; }
.brand span { font-size: 19px; line-height: 24px; font-weight: 600; }
```
